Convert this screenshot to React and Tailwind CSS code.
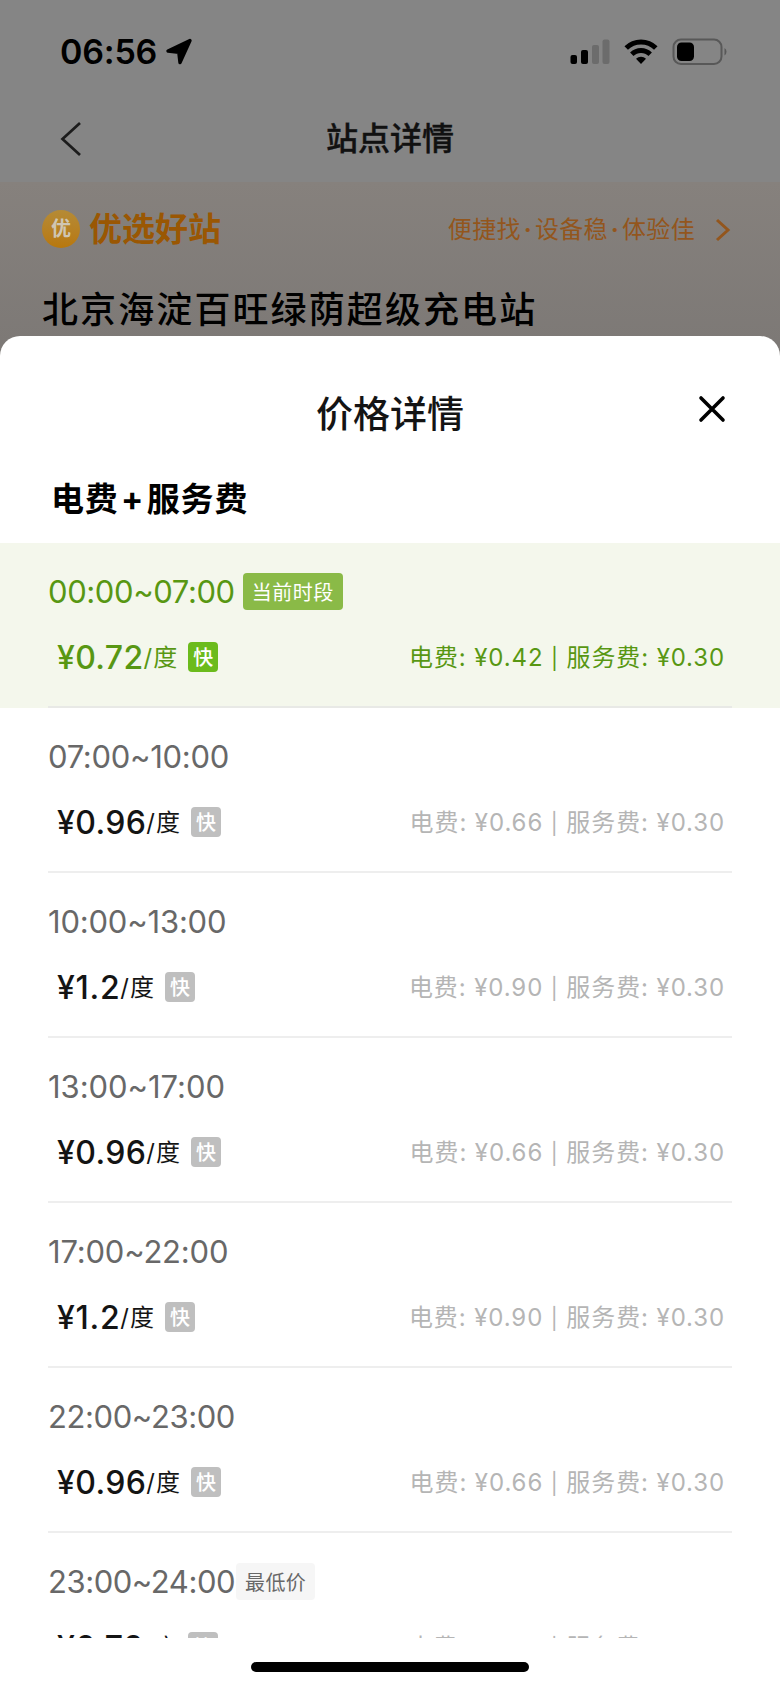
const rows = [
  { time: "00:00~07:00", price: "0.72", fee: "0.42", tag: "当前时段", active: true, track: "tracking-[-0.4px]", priceTrack: "tracking-[0.35px]" },
  { time: "07:00~10:00", price: "0.96", fee: "0.66", track: "tracking-[-0.3px]", priceTrack: "tracking-[0.4px]" },
  { time: "10:00~13:00", price: "1.2", fee: "0.90", track: "tracking-[-0.2px]", priceTrack: "tracking-[0.7px]" },
  { time: "13:00~17:00", price: "0.96", fee: "0.66", track: "tracking-[-0.05px]", priceTrack: "tracking-[0.4px]" },
  { time: "17:00~22:00", price: "1.2", fee: "0.90", track: "tracking-[-0.2px]", priceTrack: "tracking-[0.7px]" },
  { time: "22:00~23:00", price: "0.96", fee: "0.66", track: "tracking-[-0.4px]", priceTrack: "tracking-[0.4px]" },
  { time: "23:00~24:00", price: "0.72", fee: "0.42", tag: "最低价", track: "tracking-[-0.45px]", priceTrack: "tracking-[0.35px]" },
];

function StatusBar() {
  return (
    <div className="flex h-[104px] items-center justify-between pl-[60px] pr-[52px]">
      <div className="flex items-center gap-2">
        <span className="text-[34px] font-semibold leading-none tracking-[-0.2px]">06:56</span>
        <svg width="28" height="28" viewBox="0 0 28 28">
          <path d="M25 2.500 L3 13 L13.800 14.200 L15 24.500 Z" fill="#000" stroke="#000" strokeWidth="3.400" strokeLinejoin="round" />
        </svg>
      </div>
      <div className="flex items-center">
        <svg width="40" height="26" viewBox="0 0 40 26">
          <rect x="0.5" y="16" width="6.5" height="9" rx="2" />
          <rect x="11" y="11" width="7" height="14" rx="2" />
          <rect x="22" y="6" width="7" height="19" rx="2" fill="#6c6c6c" />
          <rect x="32.5" y="0.5" width="7" height="24.500" rx="2" fill="#6c6c6c" />
        </svg>
        <svg className="ml-3.5" width="34" height="26" viewBox="0 0 34 26">
          <path d="M2.2 9 A21 21 0 0 1 31.800 9" fill="none" stroke="#000" strokeWidth="5" />
          <path d="M7.800 15.300 A13 13 0 0 1 26.200 15.300" fill="none" stroke="#000" strokeWidth="4.800" />
          <path d="M12 19.800 A7.200 7.200 0 0 1 22 19.800 L17 25 Z" />
        </svg>
        <svg className="ml-3.5" width="56" height="28" viewBox="0 0 56 28">
          <rect x="1.500" y="1.500" width="48" height="24.500" rx="7.500" fill="none" stroke="#585858" strokeWidth="2" />
          <rect x="5" y="4.500" width="17" height="18.500" rx="4.500" />
          <path d="M52.500 10 a4.500 4.500 0 0 1 0 7.500 Z" fill="#585858" />
        </svg>
      </div>
    </div>
  );
}

function PriceRow({ row }) {
  const { time, price, fee, tag, active, track, priceTrack } = row;
  return (
    <div className={active ? "h-[165px] bg-[#f4f7ec] px-12" : "h-[165px] px-12"}>
      <div className={active ? "h-full border-b-2 border-[#e8e9e6] pt-[30px]" : "h-full border-b-2 border-[#eeeeee] pt-[30px]"}>
        <div className={active ? "flex h-[37px] items-center text-[#589713]" : "flex h-[37px] items-center text-[#686868]"}>
          <span className={`text-[31px] leading-none ${track}`}>{time}</span>
          {tag && (
            <span className={active
              ? "ml-2 flex h-[37px] items-center rounded bg-[#8aba47] px-[9px] pt-0.5 text-[20px] tracking-[0.5px] text-white"
              : "ml-px flex h-[37px] items-center rounded bg-[#f6f6f6] px-[9px] pt-0.5 text-[20px] tracking-[0.3px] text-[#686868]"}>{tag}</span>
          )}
        </div>
        <div className={active ? "mt-[30px] flex h-[34px] items-center text-[#589713]" : "mt-[30px] flex h-[34px] items-center text-[#141414]"}>
          <span className={`ml-[9px] pt-0.5 text-[32px] font-medium leading-none ${priceTrack}`}>¥{price}</span>
          <span className="pt-0.5 text-[24px] leading-none tracking-[1px]">/度</span>
          <span className={active
            ? "ml-2.5 flex size-[30px] items-center justify-center rounded bg-[#6bbb1c] pt-0.5 text-[20px] font-medium leading-none text-white"
            : "ml-2.5 flex size-[30px] items-center justify-center rounded bg-[#bfbfbf] pt-0.5 text-[20px] font-medium leading-none text-white"}>快</span>
          <span className={active ? "ml-auto mr-[7px] pt-0.5 text-[24px] leading-none tracking-[0.88px]" : "ml-auto mr-[7px] pt-0.5 text-[24px] leading-none tracking-[0.9px] text-[#b5b5b5]"}>
            电费: ¥{fee} <span className="text-[21px]">|</span> 服务费: ¥0.30
          </span>
        </div>
      </div>
    </div>
  );
}

export default function App() {
  return (
    <div className="flex h-[1688px] w-[780px] flex-col overflow-hidden bg-[#858585] font-['Inter','Noto_Sans_CJK_SC',sans-serif] text-black">
      <StatusBar />
      <div className="grid h-[78px] grid-cols-[1fr_auto_1fr] items-center pb-[9px] text-[#111]">
        <svg className="ml-[59px]" width="22" height="34" viewBox="0 0 22 34"><path d="M21 1 L3.500 17 L21 33" fill="none" stroke="#1c1c1c" strokeWidth="2.700" /></svg>
        <h1 className="text-[32px] font-medium leading-none [-webkit-text-stroke:0.4px_#111]">站点详情</h1>
      </div>
      <div className="flex min-h-0 flex-1 flex-col bg-linear-to-b from-[#86817d] from-0% to-[#7d7976] to-[160px]">
        <div className="h-[154px] shrink-0 pl-[42px] pr-[49px] pt-[28px]">
          <div className="flex h-[38px] items-center">
            <span className="flex size-[38px] items-center justify-center rounded-full bg-linear-to-b from-[#b58b35] to-[#b8780b] text-[20px] font-bold text-[#cfc6b4]">优</span>
            <span className="ml-[9px] text-[33px] font-bold leading-none text-[#9a5703]">优选好站</span>
            <span className="ml-auto flex pt-0.5 text-[24px] leading-none tracking-[0.35px] text-[#93561d]">
              便捷找<span className="w-[14px] text-center font-bold">·</span>设备稳<span className="w-[14px] text-center font-bold">·</span>体验佳
            </span>
            <svg className="ml-5 mt-0.5" width="16" height="24" viewBox="0 0 16 24"><path d="M2 2 L13 12 L2 22" fill="none" stroke="#93561d" strokeWidth="3" /></svg>
          </div>
          <h2 className="mt-[44px] text-[36px] font-medium leading-none tracking-[2.1px]">北京海淀百旺绿荫超级充电站</h2>
        </div>
        <div className="flex min-h-0 flex-1 flex-col rounded-t-[20px] bg-white">
          <div className="relative flex h-[147px] shrink-0 items-center justify-center pt-[9px] text-[#141414]">
            <span className="text-[37px] font-medium leading-none">价格详情</span>
            <svg className="absolute right-[54px] top-[59px]" width="28" height="28" viewBox="0 0 28 28"><path d="M3 3 L25 25 M25 3 L3 25" stroke="#000" strokeWidth="3.600" strokeLinecap="round" /></svg>
          </div>
          <h3 className="h-[60px] shrink-0 pl-[51px] text-[33px] font-bold leading-none tracking-[0.8px]">
            电费<span className="px-[2.5px]">+</span>服务费
          </h3>
          <div className="h-[1095px] shrink-0 overflow-hidden">
            {rows.map((row) => <PriceRow key={row.time} row={row} />)}
          </div>
          <div className="mx-auto mt-6 h-2.5 w-[278px] shrink-0 rounded-full bg-black" />
        </div>
      </div>
    </div>
  );
}
